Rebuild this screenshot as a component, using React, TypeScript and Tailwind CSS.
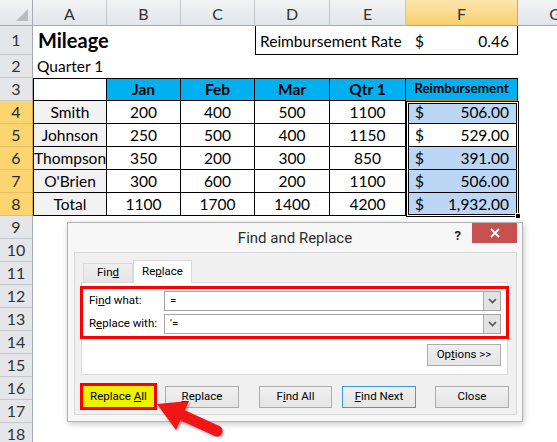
import React from "react";

type Kids = { children?: React.ReactNode };

function RowHead({ n, sel = false }: { n: number; sel?: boolean }) {
  return (
    <div
      className={
        sel
          ? "w-[33px] shrink-0 h-full flex items-center justify-center bg-[#fcd571] border-r border-b border-r-[#e0a43f] border-b-[#e8c06c] text-[16px] text-[#2b2b2b]"
          : "w-[33px] shrink-0 h-full flex items-center justify-center bg-[#e4e6ea] border-r border-b border-r-[#a6abb1] border-b-[#c6cacf] text-[16px] text-[#333]"
      }
    >
      {n}
    </div>
  );
}

function Row({ h = "h-[23px]", children }: { h?: string } & Kids) {
  return <div className={`flex shrink-0 ${h}`}>{children}</div>;
}

const W = ["w-[74px]", "w-[74px]", "w-[74px]", "w-[75px]", "w-[76px]", "w-[112px]"];

function Cell({ w, cls = "", children }: { w: string; cls?: string } & Kids) {
  return (
    <div className={`${w} shrink-0 h-full flex items-end whitespace-nowrap leading-[19px] ${cls}`}>
      {children}
    </div>
  );
}

const data: [string, number, number, number, number, string][] = [
  ["Smith", 200, 400, 500, 1100, "506.00"],
  ["Johnson", 250, 500, 400, 1150, "529.00"],
  ["Thompson", 350, 200, 300, 850, "391.00"],
  ["O'Brien", 300, 600, 200, 1100, "506.00"],
  ["Total", 1100, 1700, 1400, 4200, "1,932.00"],
];

function Btn({ w, cls = "", children }: { w: string; cls?: string } & Kids) {
  return (
    <div
      className={`${w} h-[22px] shrink-0 border flex items-center justify-center text-[11.5px] text-black ${cls}`}
    >
      <span className="whitespace-pre">{children}</span>
    </div>
  );
}

function Chevron() {
  return (
    <svg width="9" height="6" viewBox="0 0 9 6">
      <polyline points="1,1 4.5,4.5 8,1" fill="none" stroke="#555" strokeWidth="1.6" />
    </svg>
  );
}

function Combo({ value }: { value: string }) {
  return (
    <div className="flex-1 h-[20px] bg-white border border-[#a4a4a4] flex items-center justify-between">
      <span className="pl-[5px] text-[11.5px] text-black">{value}</span>
      <div className="w-[17px] h-full bg-[#e3e3e3] border-l border-[#acacac] flex items-center justify-center">
        <Chevron />
      </div>
    </div>
  );
}

export default function App() {
  return (
    <div className="relative w-[557px] h-[442px] overflow-hidden bg-white font-['Lato',sans-serif] text-black">
      {/* Column header */}
      <Row h="h-[26px]">
        <div className="w-[33px] shrink-0 h-full bg-linear-to-b from-[#f2f3f5] to-[#e2e5e9] border-r border-b border-r-[#a6abb1] border-b-[#a6abb1] flex items-end justify-end pr-[4px] pb-[4px]">
          <svg width="12" height="12" viewBox="0 0 12 12">
            <polygon points="12,0 12,12 0,12" fill="#b9bcc1" />
          </svg>
        </div>
        {["A", "B", "C", "D", "E"].map((l, i) => (
          <div
            key={l}
            className={`${W[i]} shrink-0 h-full bg-linear-to-b from-[#f2f3f5] to-[#e2e5e9] border-r border-b border-r-[#c3c7cc] border-b-[#a6abb1] flex items-center justify-center text-[16px] text-[#333] pt-[2px]`}
          >
            {l}
          </div>
        ))}
        <div className="w-[112px] shrink-0 h-full bg-linear-to-b from-[#fbe6ac] to-[#f8cf6e] border-r border-b border-r-[#e2a850] border-b-[#e59a32] flex items-center justify-center text-[16px] text-[#333] pt-[2px]">
          F
        </div>
        <div className="w-[74px] shrink-0 h-full bg-linear-to-b from-[#f2f3f5] to-[#e2e5e9] border-b border-b-[#a6abb1] flex items-center justify-center text-[16px] text-[#333] pt-[2px]">
          G
        </div>
      </Row>

      {/* Row 1 */}
      <Row h="h-[29px]">
        <RowHead n={1} />
        <Cell w="w-[74px]" cls="pl-[5px] pb-[3px] overflow-visible">
          <span className="text-[20px] font-bold leading-[24px]">Mileage</span>
        </Cell>
        <Cell w="w-[74px]" />
        <Cell w="w-[74px]" />
        <Cell w="w-[75px]" cls="border-l border-b border-black pl-[4px] pb-[3px] text-[15.5px]">
          Reimbursement Rate
        </Cell>
        <Cell w="w-[76px]" cls="border-b border-black" />
        <Cell w="w-[112px]" cls="border-r border-b border-black pl-[9px] pr-[8px] pb-[3px] justify-between text-[15.5px]">
          <span>$</span>
          <span>0.46</span>
        </Cell>
      </Row>

      {/* Row 2 */}
      <Row>
        <RowHead n={2} />
        <Cell w="w-[74px]" cls="pl-[4px] pb-[2px] text-[15.5px]">
          Quarter 1
        </Cell>
      </Row>

      {/* Row 3 */}
      <Row>
        <RowHead n={3} />
        <Cell w="w-[74px]" cls="border border-black bg-white" />
        {["Jan", "Feb", "Mar", "Qtr 1"].map((t, i) => (
          <Cell
            key={t}
            w={W[i + 1]}
            cls="border-t border-r border-b border-black bg-[#00b0f0] justify-center font-bold text-[15.5px] pb-[1px]"
          >
            {t}
          </Cell>
        ))}
        <Cell w="w-[112px]" cls="border-t border-r border-b border-black border-b-[#e46c0a] bg-[#00b0f0] justify-center font-bold text-[13.5px] pb-[2px]">
          Reimbursement
        </Cell>
      </Row>

      {/* Rows 4-8 */}
      {data.map((r, ri) => (
        <Row key={r[0]}>
          <RowHead n={ri + 4} sel />
          <Cell w="w-[74px]" cls="border-l border-r border-b border-black bg-[#f2f2f2] justify-center overflow-hidden text-[15.5px] pb-[1px]">
            {r[0]}
          </Cell>
          {[r[1], r[2], r[3], r[4]].map((v, ci) => (
            <Cell key={ci} w={W[ci + 1]} cls="border-r border-b border-black justify-center text-[15.5px] pb-[1px]">
              {v}
            </Cell>
          ))}
          <Cell
            w="w-[112px]"
            cls={
              ri === 1
                ? "border-r border-b border-black bg-white justify-between pl-[9px] pr-[8px] text-[15.5px] pb-[1px]"
                : "border-r border-b border-black bg-[#bcd6f5] justify-between pl-[9px] pr-[8px] text-[15.5px] pb-[1px]"
            }
          >
            <span>$</span>
            <span>{r[5]}</span>
          </Cell>
        </Row>
      ))}

      {/* Rows 9-18 */}
      {[9, 10, 11, 12, 13, 14, 15, 16, 17, 18].map((n) => (
        <Row key={n}>
          <RowHead n={n} />
        </Row>
      ))}

      {/* Selection outline F4:F8 */}
      <div className="absolute left-[406px] top-[101px] w-[113px] h-[116px] border border-black shadow-[inset_0_0_0_1px_#ffffff,inset_0_0_0_2px_#000000]" />
      <div className="absolute left-[515px] top-[213px] w-[6px] h-[6px] bg-black border border-white" />

      {/* Find and Replace dialog */}
      <div className="absolute left-[67px] top-[222px] w-[456px] h-[200px] bg-[#f7f7f7] border border-[#b4b4b4] shadow-[1px_2px_6px_rgba(0,0,0,0.22)] flex flex-col font-['Roboto',sans-serif]">
        <div className="relative h-[29px] shrink-0 flex items-center justify-center">
          <span className="text-[15px] text-[#2e2e2e] pt-[2px]">Find and Replace</span>
          <span className="absolute right-[61px] top-[3px] text-[13px] font-bold text-[#222]">?</span>
          <div className="absolute right-[5px] top-0 w-[45px] h-[20px] bg-[#c75050] flex items-center justify-center">
            <svg width="10" height="10" viewBox="0 0 10 10">
              <path d="M1 1 L9 9 M9 1 L1 9" stroke="#ffffff" strokeWidth="1.8" />
            </svg>
          </div>
        </div>

        <div className="ml-[6px] mr-[5px] mb-[6px] flex-1 bg-[#f0f0f0] border border-[#d9d9d9] flex flex-col">
          {/* Tabs */}
          <div className="h-[29px] shrink-0 pt-[7px] pl-[8px] flex items-end">
            <div className="w-[50px] h-[19px] border border-b-0 border-[#d9d9d9] bg-linear-to-b from-[#f0f0f0] to-[#e5e5e5] flex items-center justify-center text-[11.5px]">
              <span>
                Fin<span className="underline">d</span>
              </span>
            </div>
            <div className="relative z-10 -mb-px w-[59px] h-[23px] border border-b-0 border-[#d9d9d9] bg-[#ffffff] flex items-center justify-center text-[11.5px]">
              <span>
                Re<span className="underline">p</span>lace
              </span>
            </div>
          </div>

          {/* Tab panel */}
          <div className="ml-[6px] w-[427px] h-[93px] shrink-0 bg-white border border-[#d9d9d9] flex flex-col">
            <div className="-ml-[2px] mt-[3px] w-[429px] h-[53px] border-[3px] border-[#ff0000] pt-[2px] pl-[6px] pr-[5px] flex flex-col gap-[3px]">
              <div className="flex items-center">
                <span className="w-[75px] text-[11.5px]">
                  Fi<span className="underline">n</span>d what:
                </span>
                <Combo value="=" />
              </div>
              <div className="flex items-center">
                <span className="w-[75px] text-[11.5px]">
                  R<span className="underline">e</span>place with:
                </span>
                <Combo value="'=" />
              </div>
            </div>
            <div className="mt-[5px] mr-[6px] flex justify-end">
              <Btn w="w-[74px]" cls="h-[21px] border-[#acacac] bg-linear-to-b from-[#f0f0f0] to-[#e5e5e5]">
                Op<span className="underline">t</span>ions &gt;&gt;
              </Btn>
            </div>
          </div>

          {/* Bottom buttons */}
          <div className="mt-[8px] h-[27px] shrink-0 flex items-center pl-[5px]">
            <div className="w-[77px] h-[27px] border-[3px] border-[#ff0000] bg-[#eef200] flex items-center justify-center text-[11.5px]">
              <span className="whitespace-pre">
                Replace <span className="underline">A</span>ll
              </span>
            </div>
            <Btn w="w-[74px]" cls="ml-[8px] border-[#acacac] bg-linear-to-b from-[#f0f0f0] to-[#e5e5e5]">
              <span className="underline">R</span>eplace
            </Btn>
            <Btn w="w-[73px]" cls="ml-[20px] border-[#acacac] bg-linear-to-b from-[#f0f0f0] to-[#e5e5e5]">
              F<span className="underline">i</span>nd All
            </Btn>
            <Btn w="w-[74px]" cls="ml-[10px] border-[#3c9be8] bg-linear-to-b from-[#f0f0f0] to-[#e5e5e5]">
              <span className="underline">F</span>ind Next
            </Btn>
            <Btn w="w-[74px]" cls="ml-[19px] border-[#acacac] bg-linear-to-b from-[#f0f0f0] to-[#e5e5e5]">
              Close
            </Btn>
          </div>
        </div>
      </div>

      {/* Red arrow */}
      <svg className="absolute left-0 top-0 pointer-events-none" width="557" height="442" viewBox="0 0 557 442">
        <defs>
          <filter id="sh" x="-20%" y="-20%" width="140%" height="140%">
            <feDropShadow dx="1" dy="1.5" stdDeviation="1.2" floodColor="#000" floodOpacity="0.35" />
          </filter>
        </defs>
        <g filter="url(#sh)">
          <line x1="182" y1="415" x2="217" y2="431" stroke="#f01414" strokeWidth="11" strokeLinecap="round" />
          <polygon points="157,404 189,401 176,430" fill="#f01414" />
        </g>
      </svg>
    </div>
  );
}
